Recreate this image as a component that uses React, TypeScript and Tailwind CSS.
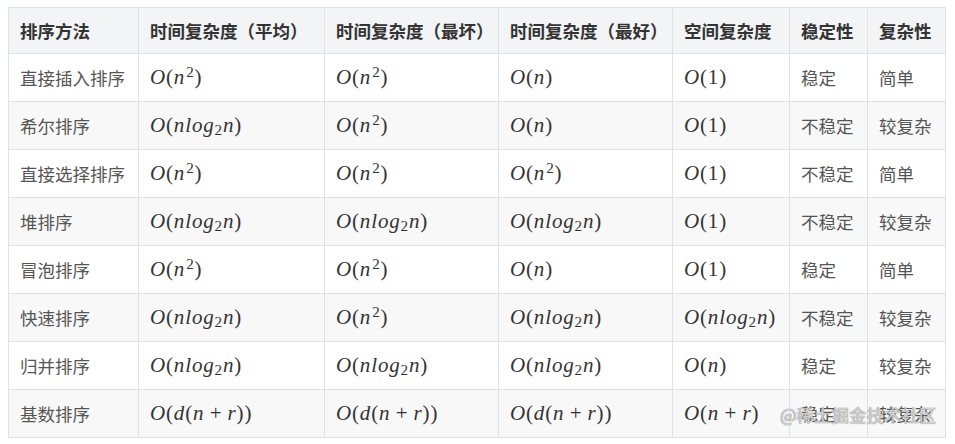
const cjk = { fontFamily: '"Noto Sans CJK SC", "Noto Sans", sans-serif' }
const mathFont = { fontFamily: '"Liberation Serif", "DejaVu Serif", serif' }

function V({ c }: { c: string }) {
  return <i className="italic">{c}</i>
}

function M({ e }: { e: string }) {
  // tiny renderer for the few formulas in the table
  const parts: React.ReactNode[] = []
  let i = 0
  let k = 0
  while (i < e.length) {
    const ch = e[i]
    if (ch === "^" || ch === "_") {
      const v = e[i + 1]
      parts.push(
        ch === "^" ? (
          <sup key={k++} className="relative -top-[0.45em] ml-[1px] text-[0.72em] not-italic">{v}</sup>
        ) : (
          <sub key={k++} className="relative -bottom-[0.2em] text-[0.72em] not-italic">{v}</sub>
        )
      )
      i += 2
      continue
    }
    if (ch === "+") {
      parts.push(<span key={k++} className="mx-[0.25em]">+</span>)
    } else if (/[a-zA-Z]/.test(ch)) {
      parts.push(<V key={k++} c={ch} />)
    } else {
      parts.push(<span key={k++}>{ch}</span>)
    }
    i++
  }
  return <span style={mathFont} className="text-[21px] tracking-[0.04em] text-[#333]">{parts}</span>
}

const head = ["排序方法", "时间复杂度（平均）", "时间复杂度（最坏）", "时间复杂度（最好）", "空间复杂度", "稳定性", "复杂性"]

const rows: string[][] = [
  ["直接插入排序", "O(n^2)", "O(n^2)", "O(n)", "O(1)", "稳定", "简单"],
  ["希尔排序", "O(nlog_2n)", "O(n^2)", "O(n)", "O(1)", "不稳定", "较复杂"],
  ["直接选择排序", "O(n^2)", "O(n^2)", "O(n^2)", "O(1)", "不稳定", "简单"],
  ["堆排序", "O(nlog_2n)", "O(nlog_2n)", "O(nlog_2n)", "O(1)", "不稳定", "较复杂"],
  ["冒泡排序", "O(n^2)", "O(n^2)", "O(n)", "O(1)", "稳定", "简单"],
  ["快速排序", "O(nlog_2n)", "O(n^2)", "O(nlog_2n)", "O(nlog_2n)", "不稳定", "较复杂"],
  ["归并排序", "O(nlog_2n)", "O(nlog_2n)", "O(nlog_2n)", "O(n)", "稳定", "较复杂"],
  ["基数排序", "O(d(n+r))", "O(d(n+r))", "O(d(n+r))", "O(n+r)", "稳定", "较复杂"],
]

export default function App() {
  return (
    <div className="relative h-[444px] w-[955px] overflow-hidden bg-white pl-2 pt-[7px]" style={cjk}>
      <table className="w-[937px] table-fixed border-collapse text-[17.5px] leading-none">
        <colgroup>
          <col className="w-[130px]" />
          <col className="w-[186px]" />
          <col className="w-[174px]" />
          <col className="w-[174px]" />
          <col className="w-[117px]" />
          <col className="w-[78px]" />
          <col className="w-[78px]" />
        </colgroup>
        <thead>
          <tr className="h-[46px] bg-[#f2f4f6]">
            {head.map((h) => (
              <th
                key={h}
                className="border border-[#dfe2e5] px-[11px] text-left font-bold whitespace-nowrap text-[#333]"
              >
                {h}
              </th>
            ))}
          </tr>
        </thead>
        <tbody>
          {rows.map((r, ri) => (
            <tr key={ri} className={`h-12 ${ri % 2 === 1 ? "bg-[#f8f8f8]" : "bg-white"}`}>
              {r.map((c, ci) => (
                <td key={ci} className="border border-[#dfe2e5] px-[11px] whitespace-nowrap text-[#555]">
                  {ci >= 1 && ci <= 4 ? <M e={c} /> : c}
                </td>
              ))}
            </tr>
          ))}
        </tbody>
      </table>
      <span
        className="absolute left-[780px] top-[402px] text-[17.5px] whitespace-nowrap text-white/60"
        style={{ textShadow: "0 0 1px #888, 0 0 1px #888" }}
      >
        @稀土掘金技术社区
      </span>
    </div>
  )
}
